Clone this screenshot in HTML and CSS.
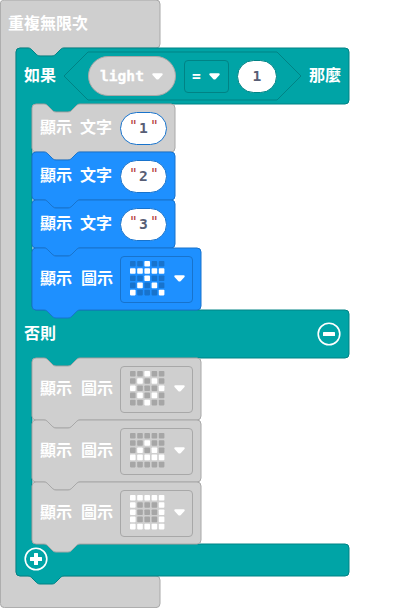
FILE: index.html
```html
<!DOCTYPE html>
<html lang="zh-Hant">
<head>
<meta charset="utf-8">
<title>Blocks</title>
<link rel="stylesheet" href="styles.css">
</head>
<body>
<svg class="defs" width="0" height="0">
  <symbol id="arrow" viewBox="0 0 11 7"><path d="M1.5.3h8q1.8.2 1 1.7L6.8 5.9q-1.3 1.1-2.6 0L.5 2Q-.3.5 1.5.3z" fill="#fff"/></symbol>
  <symbol id="short" viewBox="0 0 143 48" overflow="visible"><path d="M0 4a4 4 0 0 1 4-4H12c2 0 3 1 4 2l4 4c1 1 2 2 4 2h12c2 0 3-1 4-2l4-4c1-1 2-2 4-2H139a4 4 0 0 1 4 4V44a4 4 0 0 1-4 4H48c-2 0-3 1-4 2l-4 4c-1 1-2 2-4 2H24c-2 0-3-1-4-2l-4-4c-1-1-2-2-4-2H4a4 4 0 0 1-4-4z"/></symbol>
  <symbol id="tall" viewBox="0 0 169 62" overflow="visible"><path d="M0 4a4 4 0 0 1 4-4H12c2 0 3 1 4 2l4 4c1 1 2 2 4 2h12c2 0 3-1 4-2l4-4c1-1 2-2 4-2H165a4 4 0 0 1 4 4V58a4 4 0 0 1-4 4H48c-2 0-3 1-4 2l-4 4c-1 1-2 2-4 2H24c-2 0-3-1-4-2l-4-4c-1-1-2-2-4-2H4a4 4 0 0 1-4-4z"/></symbol>
</svg>
<main class="loop">
  <svg class="shape gray" width="160" height="608"><path d="M.4 4a4 4 0 0 1 4-4H156a4 4 0 0 1 4 4V44a4 4 0 0 1-4 4H64c-2 0-3 1-4 2l-4 4c-1 1-2 2-4 2H40c-2 0-3-1-4-2l-4-4c-1-1-2-2-4-2H20a4 4 0 0 0-4 4V572a4 4 0 0 0 4 4H156a4 4 0 0 1 4 4V603.6a4 4 0 0 1-4 4H4.4a4 4 0 0 1-4-4z"/></svg>
  <header class="loop-head">重複無限次</header>
  <section class="branch">
    <svg class="shape teal" width="333" height="528"><path d="M0 4a4 4 0 0 1 4-4H12c2 0 3 1 4 2l4 4c1 1 2 2 4 2h12c2 0 3-1 4-2l4-4c1-1 2-2 4-2H329a4 4 0 0 1 4 4V52a4 4 0 0 1-4 4H64c-2 0-3 1-4 2l-4 4c-1 1-2 2-4 2H40c-2 0-3-1-4-2l-4-4c-1-1-2-2-4-2H20a4 4 0 0 0-4 4V258a4 4 0 0 0 4 4H329a4 4 0 0 1 4 4V306a4 4 0 0 1-4 4H64c-2 0-3 1-4 2l-4 4c-1 1-2 2-4 2H40c-2 0-3-1-4-2l-4-4c-1-1-2-2-4-2H20a4 4 0 0 0-4 4V492a4 4 0 0 0 4 4H329a4 4 0 0 1 4 4V524a4 4 0 0 1-4 4H48c-2 0-3 1-4 2l-4 4c-1 1-2 2-4 2H24c-2 0-3-1-4-2l-4-4c-1-1-2-2-4-2H4a4 4 0 0 1-4-4z"/></svg>
    <div class="if-row">
      <span class="label">如果</span>
      <div class="condition">
        <svg class="shape teal" width="237" height="48"><path d="M24 0H213L237 24L213 48H24L0 24z"/></svg>
        <div class="variable"><span class="mono">light</span><svg class="arrow"><use href="#arrow"/></svg></div>
        <div class="operator"><span class="mono">=</span><svg class="arrow"><use href="#arrow"/></svg></div>
        <div class="number mono">1</div>
      </div>
      <span class="label">那麼</span>
    </div>
    <div class="stack">
      <div class="block text off"><svg class="shape gray" width="143" height="48"><use href="#short"/></svg><span>顯示</span><span>文字</span><div class="string mono"><i>"</i><b>1</b><i>"</i></div></div>
      <div class="block text"><svg class="shape blue" width="143" height="48"><use href="#short"/></svg><span>顯示</span><span>文字</span><div class="string mono"><i>"</i><b>2</b><i>"</i></div></div>
      <div class="block text"><svg class="shape blue" width="143" height="48"><use href="#short"/></svg><span>顯示</span><span>文字</span><div class="string mono"><i>"</i><b>3</b><i>"</i></div></div>
      <div class="block picture"><svg class="shape blue" width="169" height="62"><use href="#tall"/></svg><span>顯示</span><span>圖示</span><div class="picker"><svg class="leds" data-leds="00100 11111 00100 01010 10001"></svg><svg class="arrow"><use href="#arrow"/></svg></div></div>
    </div>
    <div class="else-row">
      <span class="label">否則</span>
      <svg class="toggle" viewBox="0 0 24 24"><circle cx="12" cy="12" r="10.8"/><rect x="6" y="10" width="12" height="4" rx=".6"/></svg>
    </div>
    <div class="stack">
      <div class="block picture off"><svg class="shape gray" width="169" height="62"><use href="#tall"/></svg><span>顯示</span><span>圖示</span><div class="picker"><svg class="leds" data-leds="00100 01010 10001 01010 00100"></svg><svg class="arrow"><use href="#arrow"/></svg></div></div>
      <div class="block picture off"><svg class="shape gray" width="169" height="62"><use href="#tall"/></svg><span>顯示</span><span>圖示</span><div class="picker"><svg class="leds" data-leds="00000 00100 01010 11111 00000"></svg><svg class="arrow"><use href="#arrow"/></svg></div></div>
      <div class="block picture off"><svg class="shape gray" width="169" height="62"><use href="#tall"/></svg><span>顯示</span><span>圖示</span><div class="picker"><svg class="leds" data-leds="11111 10001 10001 10001 11111"></svg><svg class="arrow"><use href="#arrow"/></svg></div></div>
    </div>
    <div class="add-row">
      <svg class="toggle" viewBox="0 0 24 24"><circle cx="12" cy="12" r="10.8"/><path d="M10 6.6q0-.6.6-.6h2.8q.6 0 .6.6V10h3.4q.6 0 .6.6v2.8q0 .6-.6.6H14v3.4q0 .6-.6.6h-2.8q-.6 0-.6-.6V14H6.6q-.6 0-.6-.6v-2.8q0-.6.6-.6H10z"/></svg>
    </div>
  </section>
</main>
<script src="leds.js"></script>
</body>
</html>
```
FILE: styles.css
```css
* { box-sizing: border-box; }

body {
  margin: 0;
  background: #fff;
  color: #fff;
  font: 700 16px/24px "Noto Sans CJK TC", sans-serif;
}

svg { display: block; flex: none; }
.defs { position: absolute; }

.shape {
  position: absolute;
  left: 0;
  top: 0;
  z-index: -1;
  overflow: visible;
}

.gray { fill: #cfcfcf; stroke: #a8a8a8; }
.teal { fill: #00a4a6; stroke: #008385; }
.blue { fill: #1e90ff; stroke: #1873cc; }

.loop, .branch, .condition, .block {
  position: relative;
  isolation: isolate;
}

.loop { height: 608px; padding-left: 16px; overflow: hidden; }
.loop-head { height: 48px; padding: 10px 0 0; margin-left: -8px; }

.branch { width: 333px; height: 528px; }

.if-row {
  display: flex;
  align-items: center;
  gap: 8px;
  height: 56px;
  padding: 0 8px;
}

.label { width: 32px; flex: none; margin-top: -4px; white-space: nowrap; }

.condition {
  display: flex;
  align-items: center;
  gap: 8px;
  width: 237px;
  height: 48px;
  padding: 0 24px;
}

.mono {
  font-family: "DejaVu Sans Mono", monospace;
  font-size: 14.6px;
}

.variable, .operator, .picker { display: flex; align-items: center; }

.variable {
  width: 88px;
  height: 40px;
  padding-left: 11px;
  gap: 8.5px;
  border: 1px solid #a8a8a8;
  border-radius: 20px;
  background: #cfcfcf;
}

.variable .mono { -webkit-text-stroke: .3px #fff; }

.operator {
  width: 45px;
  height: 33px;
  padding-left: 7px;
  gap: 8.5px;
  border: 1px solid #008385;
  border-radius: 4px;
}

.number, .string {
  height: 33px;
  border: 1px solid #008385;
  border-radius: 17px;
  background: #fff;
  color: #575e75;
  line-height: 30px;
  text-align: center;
}

.number { width: 40px; }

.arrow { width: 11px; height: 7px; }

.stack { margin-left: 16px; }

.block { display: flex; align-items: center; padding-left: 8px; }
.block > span { width: 32px; margin: -4px 8px 0 0; white-space: nowrap; }
.text { width: 143px; height: 48px; }
.picture { width: 169px; height: 62px; }
.picture > span { margin-top: -5px; }
.picture > span + span { position: relative; left: 1px; }

.string {
  display: flex;
  justify-content: center;
  gap: 2px;
  width: 47px;
  border-color: #1873cc;
}
.string i {
  width: 8px;
  color: #b33a3a;
  font-style: normal;
  font-weight: 400;
  margin-top: -3px;
}

.picker {
  width: 73px;
  height: 47px;
  padding-left: 8.6px;
  gap: 9px;
  border: 1px solid #1873cc;
  border-radius: 4px;
}

.off .picker { border-color: #a8a8a8; }

.leds { width: 35px; height: 35px; margin-top: -1px; fill: #1873cc; }
.off .leds { fill: #a6a6a6; }
.leds .lit { fill: #fff; }
.picker .arrow { margin-top: -1px; }

.else-row {
  display: flex;
  align-items: center;
  justify-content: space-between;
  height: 48px;
  padding: 0 8px;
}

.add-row { height: 32px; padding: 3px 0 0 8px; }

.toggle { width: 24px; height: 24px; fill: #fff; }
.toggle circle { fill: none; stroke: #fff; stroke-width: 1.6; }
```
FILE: leds.js
```js
// Draws each 5x5 LED matrix from its data-leds rows.
document.querySelectorAll(".leds").forEach((svg) => {
  svg.dataset.leds.split(" ").forEach((row, y) => {
    [...row].forEach((state, x) => {
      const led = document.createElementNS("http://www.w3.org/2000/svg", "rect");
      led.setAttribute("x", x * 7.2);
      led.setAttribute("y", y * 7.2);
      led.setAttribute("width", 5.6);
      led.setAttribute("height", 5.6);
      led.setAttribute("rx", 0.8);
      if (state === "1") led.setAttribute("class", "lit");
      svg.append(led);
    });
  });
});
```
